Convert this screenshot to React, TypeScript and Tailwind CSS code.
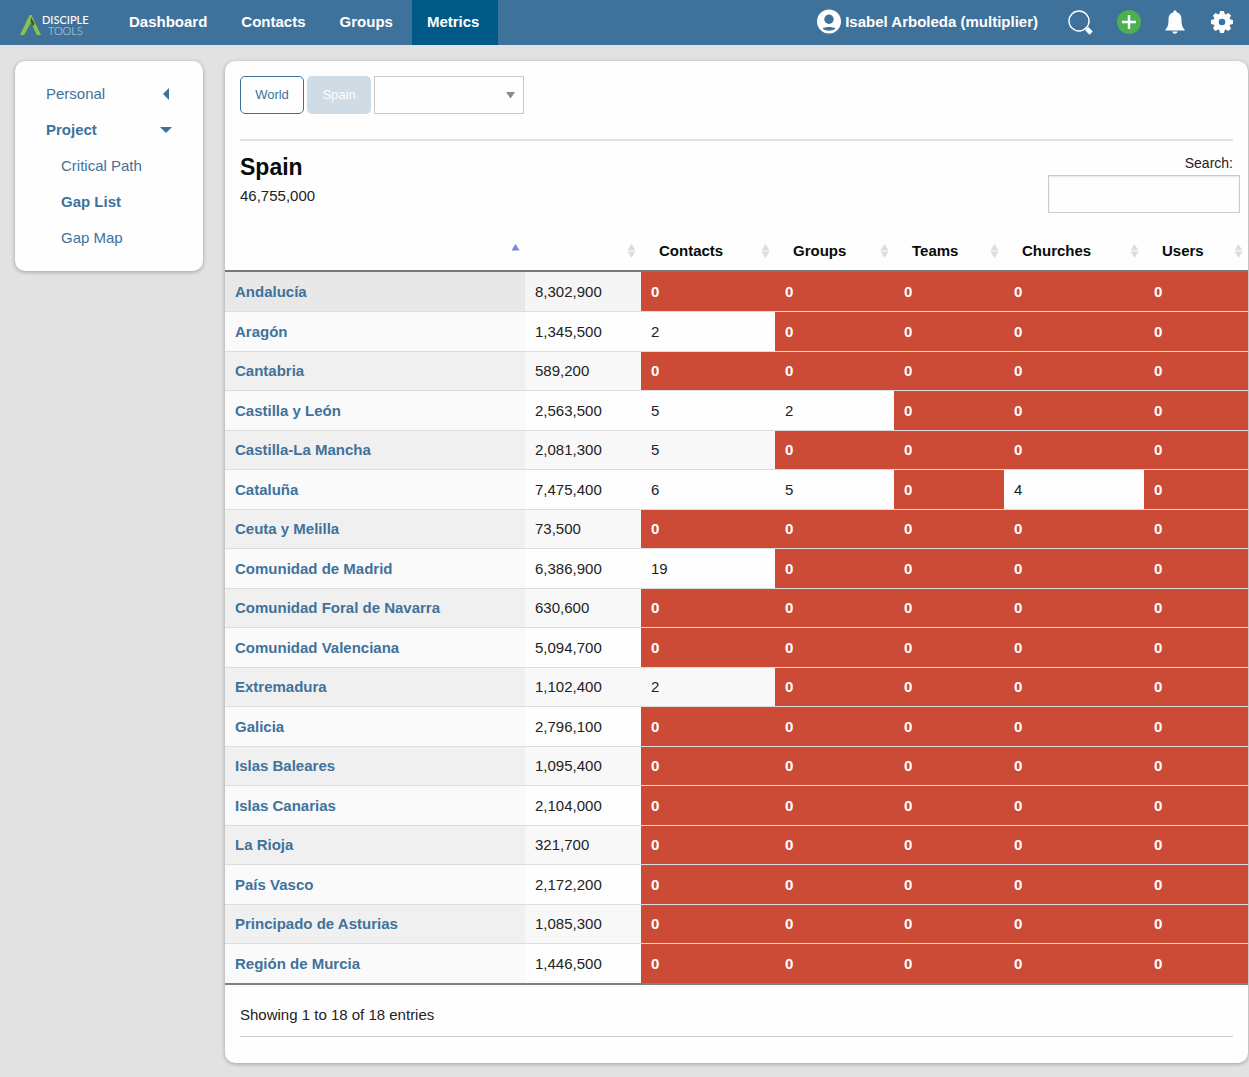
import React from "react";

const regions: [string, string, number[]][] = [
  ["Andalucía", "8,302,900", [0, 0, 0, 0, 0]],
  ["Aragón", "1,345,500", [2, 0, 0, 0, 0]],
  ["Cantabria", "589,200", [0, 0, 0, 0, 0]],
  ["Castilla y León", "2,563,500", [5, 2, 0, 0, 0]],
  ["Castilla-La Mancha", "2,081,300", [5, 0, 0, 0, 0]],
  ["Cataluña", "7,475,400", [6, 5, 0, 4, 0]],
  ["Ceuta y Melilla", "73,500", [0, 0, 0, 0, 0]],
  ["Comunidad de Madrid", "6,386,900", [19, 0, 0, 0, 0]],
  ["Comunidad Foral de Navarra", "630,600", [0, 0, 0, 0, 0]],
  ["Comunidad Valenciana", "5,094,700", [0, 0, 0, 0, 0]],
  ["Extremadura", "1,102,400", [2, 0, 0, 0, 0]],
  ["Galicia", "2,796,100", [0, 0, 0, 0, 0]],
  ["Islas Baleares", "1,095,400", [0, 0, 0, 0, 0]],
  ["Islas Canarias", "2,104,000", [0, 0, 0, 0, 0]],
  ["La Rioja", "321,700", [0, 0, 0, 0, 0]],
  ["País Vasco", "2,172,200", [0, 0, 0, 0, 0]],
  ["Principado de Asturias", "1,085,300", [0, 0, 0, 0, 0]],
  ["Región de Murcia", "1,446,500", [0, 0, 0, 0, 0]],
];

const columns = ["", "", "Contacts", "Groups", "Teams", "Churches", "Users"];

function Logo() {
  return (
    <a href="#" aria-label="Disciple Tools" className="flex items-center pt-1 pl-5">
      <svg width="22" height="22" viewBox="0 0 22 22">
        <path d="M0 21 L9.6 1 H11.4 L12.6 5.6 L4.2 21 Z" fill="#8bc34a" />
        <path d="M9.8 1 H11.4 L21 21 H16.8 L10.2 7 Z" fill="#8bc34a" />
        <path d="M11 3 L14.4 9.4 L13.2 12.4 L10.6 7.6 Z" fill="#2f5a2c" />
      </svg>
      <span className="flex w-[50px] flex-col font-['Lato'] text-[11px] leading-[11px] font-medium text-white">
        <span>DISCIPLE</span>
        <span className="pl-1.5 font-light text-[#c5d5e1]">TOOLS</span>
      </span>
    </a>
  );
}

function NavBar() {
  return (
    <header className="flex h-[45px] items-stretch bg-[#3f729b] font-bold text-white">
      <Logo />
      <nav className="ml-[22px] flex">
        {["Dashboard", "Contacts", "Groups", "Metrics"].map((t) => (
          <a
            key={t}
            href="#"
            className={"flex items-center pr-[19px] pb-0.5 pl-[15px] " + (t === "Metrics" ? "bg-[#005a87]" : "")}
          >
            {t}
          </a>
        ))}
      </nav>
      <div className="ml-auto flex items-center pr-[15px] pb-0.5">
        <a href="#" className="flex items-center gap-1">
          <svg width="24" height="25" viewBox="0 0 24 25">
            <circle cx="12" cy="12.5" r="12" fill="#fff" />
            <circle cx="12" cy="10.2" r="4.7" fill="#3f729b" />
            <path d="M5.6 19.4 C8 17.4 16 17.4 18.4 19.4 C15.5 22.4 8.5 22.4 5.6 19.4 Z" fill="#3f729b" />
          </svg>
          Isabel Arboleda (multiplier)
        </a>
        <button aria-label="Search" className="ml-[29px]">
          <svg width="26" height="26" viewBox="0 0 26 26" fill="none" stroke="#fff">
            <circle cx="12" cy="12" r="10" strokeWidth="1.4" />
            <path d="M18.6 18.6 L20.5 20.5" strokeWidth="1.6" />
            <path d="M19.6 19.6 L24.2 24.2" strokeWidth="4.6" />
          </svg>
        </button>
        <button aria-label="Add" className="ml-6">
          <svg width="24" height="24" viewBox="0 0 24 24">
            <circle cx="12" cy="12" r="12" fill="#4caf50" />
            <path d="M12 5 V19 M5 12 H19" stroke="#fff" strokeWidth="2.4" />
          </svg>
        </button>
        <button aria-label="Notifications" className="ml-6">
          <svg width="20" height="24" viewBox="0 0 20 24" fill="#fff">
            <path d="M10 0.5 C11 0.5 11.6 1.2 11.6 2.2 C15 3 16.5 5.6 16.5 9 C16.5 14.5 17 17 19.5 19.3 V20.6 H0.5 V19.3 C3 17 3.5 14.5 3.5 9 C3.5 5.6 5 3 8.4 2.2 C8.4 1.2 9 0.5 10 0.5 Z" />
            <path d="M7.4 21.6 H12.6 C12.4 23 11.4 23.8 10 23.8 C8.6 23.8 7.6 23 7.4 21.6 Z" />
          </svg>
        </button>
        <button aria-label="Settings" className="ml-[25px]">
          <svg width="24" height="24" viewBox="-12 -12 24 24">
            <circle r="5.8" fill="none" stroke="#fff" strokeWidth="5" />
            {[0, 45, 90, 135, 180, 225, 270, 315].map((a) => (
              <path key={a} d="M-3 -7 L-1.9 -11 H1.9 L3 -7 Z" fill="#fff" transform={`rotate(${a})`} />
            ))}
          </svg>
        </button>
      </div>
    </header>
  );
}

function SideMenu() {
  const link = "flex h-9 items-center justify-between";
  return (
    <aside className="w-[188px] shrink-0 rounded-[10px] bg-[#fefefe] py-[15px] text-[#3f729b] shadow-[0_1px_4px_rgba(0,0,0,0.3)]">
      <ul className="px-[31px]">
        <li>
          <a href="#" className={link}>
            Personal
            <svg width="12" height="12" viewBox="0 0 12 12"><path d="M3 6 L9 0 V12 Z" fill="#3f729b" /></svg>
          </a>
        </li>
        <li>
          <a href="#" className={link + " font-bold"}>
            Project
            <svg width="12" height="12" viewBox="0 0 12 12"><path d="M0 3 H12 L6 9 Z" fill="#3f729b" /></svg>
          </a>
          <ul className="pl-[15px]">
            <li><a href="#" className={link}>Critical Path</a></li>
            <li><a href="#" className={link + " font-bold"}>Gap List</a></li>
            <li><a href="#" className={link}>Gap Map</a></li>
          </ul>
        </li>
      </ul>
    </aside>
  );
}

function RegionTable() {
  return (
    <table className="w-full table-fixed border-separate border-spacing-0 text-left">
      <colgroup>
        <col className="w-[300px]" />
        <col className="w-[116px]" />
        <col className="w-[134px]" />
        <col className="w-[119px]" />
        <col className="w-[110px]" />
        <col className="w-[140px]" />
        <col className="w-[104px]" />
      </colgroup>
      <thead>
        <tr className="h-11">
          {columns.map((c, i) => (
            <th key={i} className="border-b-2 border-[#777] p-0 text-[#0a0a0a]">
              <div className="flex items-center justify-between pt-[3px] pr-[5px] pl-[18px]">
                <span>{c}</span>
                <svg width="9" height="14" viewBox="0 0 9 14">
                  <path d="M0.5 6.5 L4.5 0 L8.5 6.5 Z" fill={i === 0 ? "#7c83e0" : "#dcdcdc"} />
                  {i > 0 && <path d="M0.5 7.5 L4.5 14 L8.5 7.5 Z" fill="#dcdcdc" />}
                </svg>
              </div>
            </th>
          ))}
        </tr>
      </thead>
      <tbody>
        {regions.map(([name, population, counts], i) => (
          <tr key={name} className="group h-10 odd:h-[39px]">
            <th
              className={
                "border-t px-2.5 py-0 font-bold text-[#3f729b] " +
                (i === 0 ? "border-[#e8e8e8] bg-[#e8e8e8]" : "border-[#ddd] group-odd:bg-[#f0f0f0] group-even:bg-[#fafafa]")
              }
            >
              <a href="#">{name}</a>
            </th>
            <td
              className={
                "border-t px-2.5 py-0 " +
                (i === 0 ? "border-[#f5f5f5] bg-[#f5f5f5]" : "border-[#ddd] group-odd:bg-[#f8f8f8] group-even:bg-[#fefefe]")
              }
            >
              {population}
            </td>
            {counts.map((n, j) => (
              <td
                key={j}
                className={
                  "border-t px-2.5 py-0 " +
                  (i === 0 ? "border-[#cc4b37] " : "border-[#ddd] ") +
                  (n === 0 ? "bg-[#cc4b37] font-bold text-white" : "group-odd:bg-[#f8f8f8] group-even:bg-[#fefefe]")
                }
              >
                {n}
              </td>
            ))}
          </tr>
        ))}
      </tbody>
    </table>
  );
}

export default function App() {
  return (
    <div className="min-h-screen bg-[#e2e2e2] font-['Liberation_Sans',sans-serif] text-[15px] leading-[22px] text-[#222]">
      <NavBar />
      <div className="flex items-start gap-[22px] pt-4 pr-px pb-[15px] pl-[15px]">
        <SideMenu />
        <main className="min-w-0 flex-1 rounded-[10px] bg-[#fefefe] pb-[26px] shadow-[0_1px_4px_rgba(0,0,0,0.3)]">
          <div className="mx-[15px] flex gap-[3px] border-b-2 border-[#e2e2e2] pt-[15px] pb-[25px] text-[13px]">
            <button className="h-[38px] w-16 rounded-[5px] border border-[#3f729b] text-[#3f729b]">World</button>
            <button disabled className="h-[38px] w-16 rounded-[5px] bg-[#cfdce6] text-[#fefefe]">Spain</button>
            <div className="relative">
              <select aria-label="Region" className="h-[38px] w-[150px] appearance-none border border-[#cacaca] bg-[#fefefe]">
                <option></option>
              </select>
              <svg width="9" height="7" viewBox="0 0 9 7" className="pointer-events-none absolute top-4 right-[9px]">
                <path d="M0 0 H9 L4.5 6.5 Z" fill="#8a8a8a" />
              </svg>
            </div>
          </div>
          <div className="flex justify-between pt-[11px] pr-2 pl-[15px]">
            <div>
              <h1 className="text-[23px] leading-[30px] font-bold text-[#0a0a0a]">Spain</h1>
              <p className="pt-[3px]">46,755,000</p>
            </div>
            <label className="flex flex-col text-right text-sm leading-[23px]">
              <span className="pr-[7px]">Search:</span>
              <input type="search" className="h-[38px] w-48 border border-[#cacaca] bg-[#fefefe] px-2 shadow-[inset_0_1px_2px_rgba(10,10,10,0.1)]" />
            </label>
          </div>
          <div className="pt-[15px]">
            <RegionTable />
          </div>
          <div className="border-t-2 border-[#808080] px-[15px] pt-[19px]">
            <p className="border-b border-[#cacaca] pb-[10px]">Showing 1 to 18 of 18 entries</p>
          </div>
        </main>
      </div>
    </div>
  );
}
